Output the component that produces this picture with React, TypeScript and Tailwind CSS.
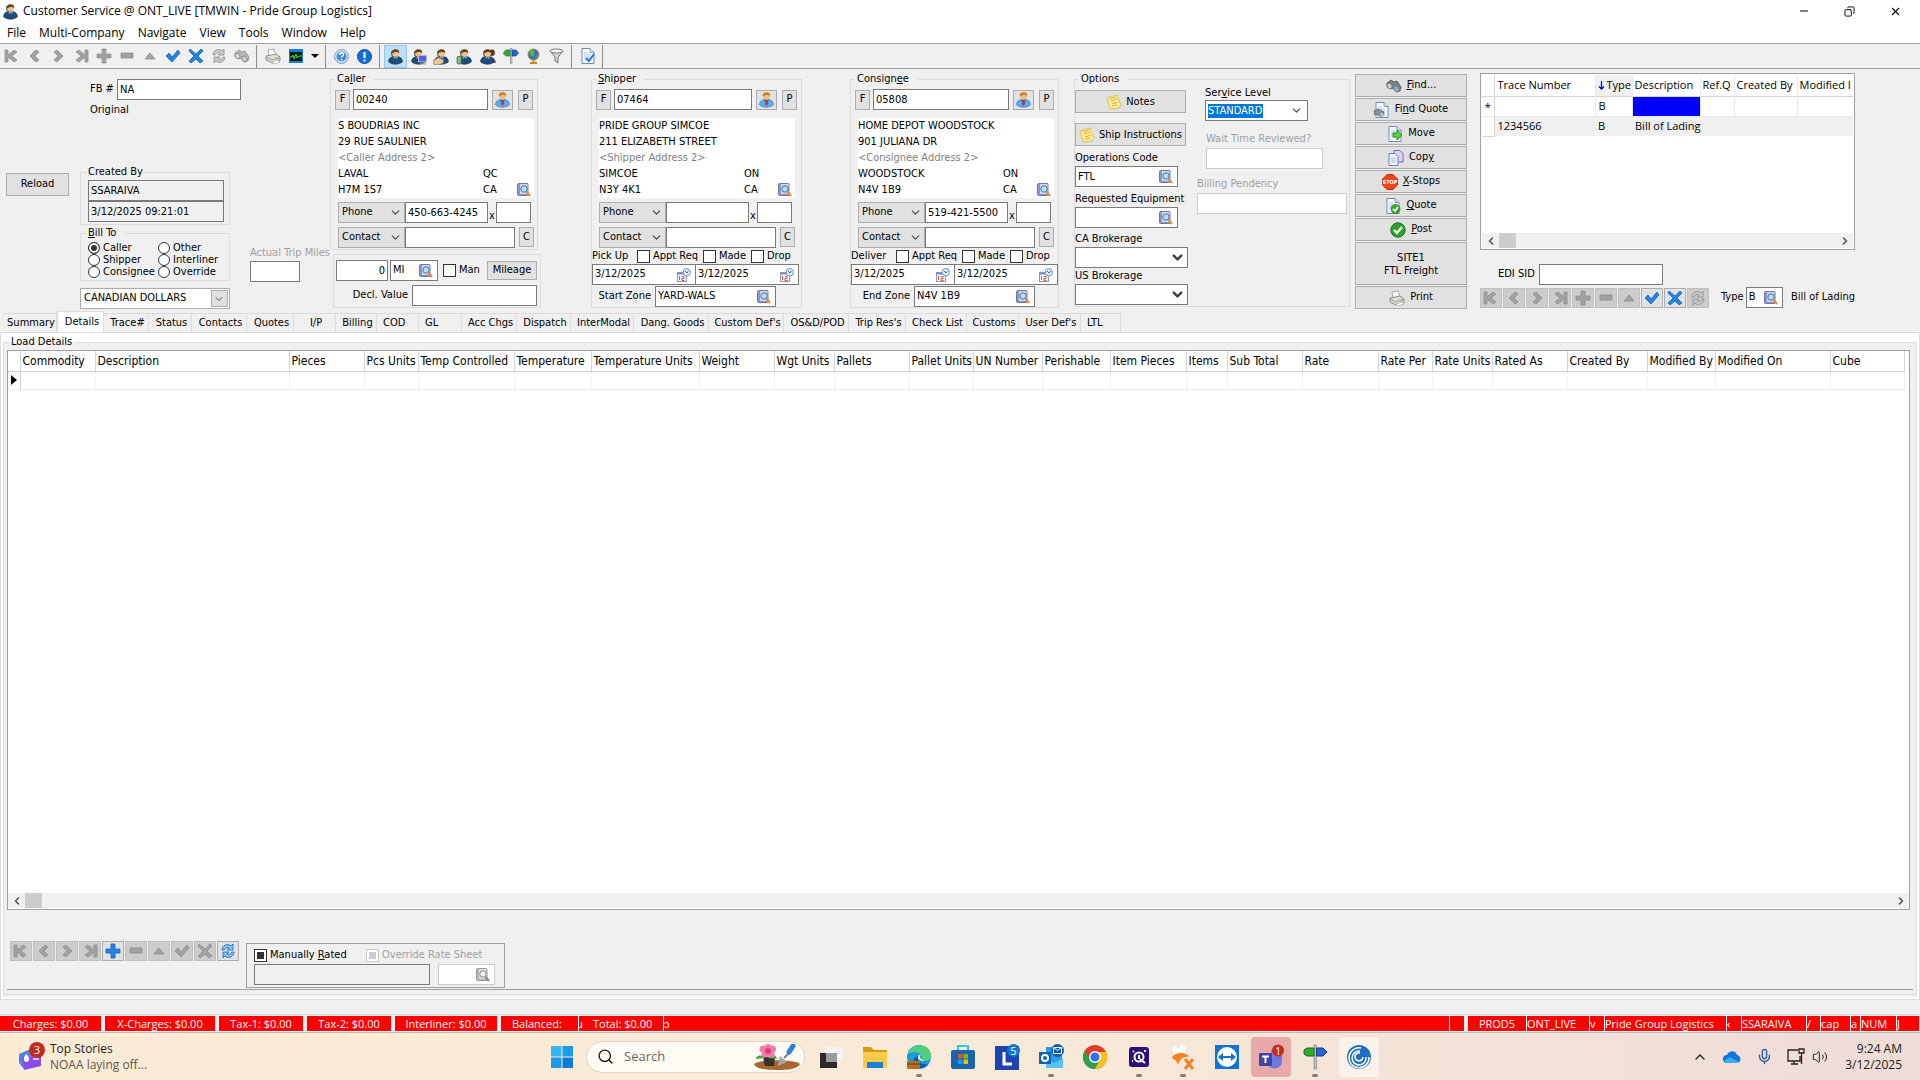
import type { ReactNode } from 'react';
import { ChevronDown, ChevronLeft, ChevronRight, ChevronUp, Copy, Mic, Minus, Search, Volume2, X } from 'lucide-react';
import { clsx } from 'clsx';

const MENUS = ['File', 'Multi-Company', 'Navigate', 'View', 'Tools', 'Window', 'Help'];

const TABS = [
  { label: 'Summary', width: 'w-[54px]' },
  { label: 'Details', width: 'w-[47px]', active: true },
  { label: 'Trace#', width: 'w-[45px]' },
  { label: 'Status', width: 'w-[43px]' },
  { label: 'Contacts', width: 'w-[55px]' },
  { label: 'Quotes', width: 'w-[47px]' },
  { label: 'I/P', width: 'w-[42px]' },
  { label: 'Billing', width: 'w-[41px]' },
  { label: 'COD', width: 'w-[42px]', left: true },
  { label: 'GL', width: 'w-[43px]', left: true },
  { label: 'Acc Chgs', width: 'w-[55px]' },
  { label: 'Dispatch', width: 'w-[54px]' },
  { label: 'InterModal', width: 'w-[63px]' },
  { label: 'Dang. Goods', width: 'w-[75px]' },
  { label: "Custom Def's", width: 'w-[75px]' },
  { label: 'OS&D/POD', width: 'w-[65px]' },
  { label: "Trip Res's", width: 'w-[57px]' },
  { label: 'Check List', width: 'w-[61px]' },
  { label: 'Customs', width: 'w-[52px]' },
  { label: "User Def's", width: 'w-[62px]' },
  { label: 'LTL', width: 'w-[40px]', left: true },
];

const COLUMNS = [
  { label: 'Commodity', width: 'w-[75px]' },
  { label: 'Description', width: 'w-[194px]' },
  { label: 'Pieces', width: 'w-[75px]' },
  { label: 'Pcs Units', width: 'w-[54px]' },
  { label: 'Temp Controlled', width: 'w-[96px]' },
  { label: 'Temperature', width: 'w-[77px]' },
  { label: 'Temperature Units', width: 'w-[108px]' },
  { label: 'Weight', width: 'w-[75px]' },
  { label: 'Wgt Units', width: 'w-[60px]' },
  { label: 'Pallets', width: 'w-[75px]' },
  { label: 'Pallet Units', width: 'w-[64px]' },
  { label: 'UN Number', width: 'w-[69px]' },
  { label: 'Perishable', width: 'w-[68px]' },
  { label: 'Item Pieces', width: 'w-[76px]' },
  { label: 'Items', width: 'w-[41px]' },
  { label: 'Sub Total', width: 'w-[75px]' },
  { label: 'Rate', width: 'w-[76px]' },
  { label: 'Rate Per', width: 'w-[54px]' },
  { label: 'Rate Units', width: 'w-[60px]' },
  { label: 'Rated As', width: 'w-[75px]' },
  { label: 'Created By', width: 'w-[80px]' },
  { label: 'Modified By', width: 'w-[68px]' },
  { label: 'Modified On', width: 'w-[115px]' },
  { label: 'Cube', width: 'w-[74px]' },
];

const CHARGES = [
  { label: 'Charges: $0.00', width: 'w-[101px]' },
  { label: 'X-Charges: $0.00', width: 'w-[110px]' },
  { label: 'Tax-1: $0.00', width: 'w-[84px]' },
  { label: 'Tax-2: $0.00', width: 'w-[84px]' },
  { label: 'Interliner: $0.00', width: 'w-[102px]' },
];

const SESSION = [
  { label: 'PROD5', width: 'w-[59px] justify-center' },
  { label: 'ONT_LIVE', width: 'w-[63px]' },
  { label: 'v', width: 'w-[15px]' },
  { label: 'Pride Group Logistics', width: 'w-[122px]' },
  { label: '‹', width: 'w-[15px]' },
  { label: 'SSARAIVA', width: 'w-[65px]' },
  { label: '/', width: 'w-[14px]' },
  { label: 'cap', width: 'w-[30px]' },
  { label: 'a', width: 'w-[10px]' },
  { label: 'NUM', width: 'w-[36px]' },
  { label: 'J', width: 'w-[23px]' },
];

type NavName = 'first' | 'prev' | 'next' | 'last' | 'add' | 'remove' | 'up' | 'check' | 'cancel' | 'refresh';

const NAV: NavName[] = ['first', 'prev', 'next', 'last', 'add', 'remove', 'up', 'check', 'cancel', 'refresh'];

const NAV_PATHS: Record<NavName, string> = {
  first: 'M1 2h3v5l6-5 3 2-5 4 5 4-3 2-6-5v5H1z',
  prev: 'M9 2l3 2-4 4 4 4-3 2-6-6z',
  next: 'M7 2L4 4l4 4-4 4 3 2 6-6z',
  last: 'M15 2h-3v5L6 2 3 4l5 4-5 4 3 2 6-5v5h3z',
  add: 'M6 1h4v5h5v4h-5v5H6v-5H1V6h5z',
  remove: 'M2 5h12v5H2z',
  up: 'M8 5l5 6H3z',
  check: 'M1 8l3-3 3 4 6-7 2 3-8 9z',
  cancel: 'M2 1l6 5 5-5 2 2-5 5 5 5-3 2-4-4-5 4-2-2 5-5-5-5z',
  refresh: 'M2 7c0-5 6-7 9-4l2-2v6H7l2-2C7 4 5 5 4 7zM14 9c0 5-6 7-9 4l-2 2V9h6l-2 2c2 1 4 0 5-2z',
};

function NavIcon({ name, on = false }: { name: NavName; on?: boolean }) {
  const light = name === 'refresh';
  return (
    <svg width="16" height="16" viewBox="0 0 16 16">
      <path
        d={NAV_PATHS[name]}
        fill={on ? (light ? '#7cc6f7' : '#2384e8') : light ? '#c8c8c8' : '#a2a2a2'}
        stroke={on ? '#1462b8' : '#8e8e8e'}
        strokeWidth="0.8"
      />
    </svg>
  );
}

function Binoculars({ gray = false }: { gray?: boolean }) {
  return (
    <svg width="16" height="16" viewBox="0 0 16 16">
      <path
        d="M1 5l4-3 3 2 3-1 4 6-1 4-4 1-3-4-2 1-4-2z"
        fill={gray ? '#b4b4b4' : '#7b8082'}
        stroke={gray ? '#8a8a8a' : '#44494c'}
        strokeWidth="0.7"
      />
      <ellipse cx="3.500" cy="8" rx="2.300" ry="2.800" transform="rotate(-30 3.500 8)" fill={gray ? '#dedede' : '#c6d0d6'} stroke="#777" strokeWidth="0.7" />
      <ellipse cx="10.500" cy="11" rx="2.500" ry="3" transform="rotate(-30 10.500 11)" fill={gray ? '#cfcfcf' : '#8bb6dc'} stroke="#777" strokeWidth="0.7" />
    </svg>
  );
}

function Lens({ gray = false }: { gray?: boolean }) {
  return (
    <svg width="14" height="14" viewBox="0 0 14 14">
      <rect x="0.500" y="0.500" width="10.500" height="12" rx="1" fill={gray ? '#dcdcdc' : '#d3d5ef'} stroke={gray ? '#999' : '#7276a6'} />
      <path d="M2 1v11" stroke={gray ? '#b5b5b5' : '#8f93cc'} strokeWidth="2" />
      <path d="M3 11.500h8" stroke={gray ? '#b5b5b5' : '#8f93cc'} />
      <circle cx="7" cy="6" r="3.200" fill={gray ? '#eee' : '#aee2fb'} stroke={gray ? '#8d8d8d' : '#4f7796'} />
      <path d="M9.500 9l3.500 4" stroke={gray ? '#888' : '#ee8636'} strokeWidth="2.200" />
    </svg>
  );
}

function Person({ dark = false, badge }: { dark?: boolean; badge?: 'pc' | 'box' | 'phone' | 'pair' }) {
  return (
    <svg width="17" height="17" viewBox="0 0 16 16">
      {badge === 'pair' && (
        <g>
          <circle cx="12" cy="4.500" r="3" fill="#5b3a2e" />
          <path d="M8 14c0-5 8-6 8 0z" fill="#c0485a" />
        </g>
      )}
      <path
        d="M1.500 13c0-4 3-5 6.500-5s6.500 1 6.500 5c-3 3-10 3-13 0z"
        fill={dark ? '#1d4a7a' : '#55aef0'}
        stroke={dark ? '#122f52' : '#2478c4'}
        strokeWidth="0.6"
      />
      <path d="M5.500 8L8 13l2.500-5z" fill={dark ? '#9fb6cc' : '#2470c8'} />
      <path d="M7.300 9h1.400l.8 3L8 14l-1.500-2z" fill={dark ? '#1d4a7a' : '#d62f20'} />
      <circle cx="8" cy="5" r="3.200" fill="#f6bd7d" />
      <path d="M4.500 5C3.500 0 12.500 0 11.500 5 10 3 7 3.500 4.500 5z" fill={dark ? '#5d4526' : '#c4841d'} />
      {dark && <path d="M4.500 3v4l2 1.500" fill="none" stroke="#333" strokeWidth="0.9" />}
      {badge === 'pc' && (
        <g>
          <rect x="8" y="7" width="7.500" height="6" fill="#4b63e6" stroke="#b8b8c8" />
          <path d="M9 15h6" stroke="#999" />
        </g>
      )}
      {badge === 'box' && <path d="M0 12l5-3 5 2v3l-5 2-5-1z" fill="#e8c795" stroke="#7d6337" strokeWidth="0.6" />}
      {badge === 'phone' && <rect x="1" y="8" width="4" height="7" rx="1" fill="#7fbe8e" stroke="#2b5a36" strokeWidth="0.7" />}
    </svg>
  );
}

function Printer() {
  return (
    <svg width="16" height="16" viewBox="0 0 16 16">
      <path d="M4 8L3 2l6-1 2 6z" fill="#fff" stroke="#8793a6" strokeWidth="0.8" />
      <path d="M1 8l10-2 4 3v4l-8 2-6-3z" fill="#dcdcd6" stroke="#7d7d78" strokeWidth="0.8" />
      <path d="M1 9l6 3 8-3" fill="none" stroke="#8f8f88" strokeWidth="0.8" />
      <path d="M7 14l6-2 2 2-6 2z" fill="#fff" stroke="#888" strokeWidth="0.5" />
      <circle cx="13" cy="11" r="0.8" fill="#4ec22d" />
    </svg>
  );
}

function Note() {
  return (
    <svg width="16" height="16" viewBox="0 0 16 16">
      <path d="M1 4l10-3 4 10-2 3-9 1z" fill="#fdeb92" stroke="#d9b84a" strokeWidth="0.8" />
      <path d="M4 5l6-2M5 7l6-2M6 10l6-2M6 12l5-1" stroke="#cfa83c" strokeWidth="0.8" />
    </svg>
  );
}

function Sheet({ children }: { children?: ReactNode }) {
  return (
    <svg width="16" height="16" viewBox="0 0 16 16">
      <path d="M2 0.500h8l4 4v11H2z" fill="#f4f8ff" stroke="#6f8db5" />
      <path d="M10 0.500v4h4" fill="#cbdcf2" stroke="#6f8db5" strokeWidth="0.8" />
      <path d="M4 5h4M4 7h7M4 9h7M4 11h5" stroke="#a9bcd8" strokeWidth="0.8" />
      {children}
    </svg>
  );
}

function CalendarClock() {
  return (
    <svg width="14" height="14" viewBox="0 0 14 14">
      <rect x="0.500" y="4.500" width="9" height="9" fill="#f3f5fb" stroke="#8e97c4" />
      <path d="M0 5.500h9" stroke="#7e8bd6" strokeWidth="2" />
      <path d="M2.500 8v4M5 8.500h2v2H5v2h2.500" stroke="#df5b31" fill="none" />
      <circle cx="9.800" cy="4.200" r="3.700" fill="#dcefff" stroke="#6b96b8" />
      <path d="M8 3l2 2 1.500-2" stroke="#355" fill="none" strokeWidth="0.9" />
    </svg>
  );
}

function ToolButton({ label, active, children }: { label: string; active?: boolean; children: ReactNode }) {
  return (
    <button
      type="button"
      aria-label={label}
      className={clsx('flex h-[23px] w-[23px] items-center justify-center', active && 'border border-[#90c8f6] bg-[#bfdff7]')}
    >
      {children}
    </button>
  );
}

function Separator() {
  return <div className="mr-1 ml-[3px] h-[23px] w-px shrink-0 bg-[#8d8d8d]" />;
}

function Field({ label, value = '', className }: { label: string; value?: string; className?: string }) {
  return (
    <input
      type="text"
      aria-label={label}
      defaultValue={value}
      className={clsx('h-[21px] min-w-0 border px-[2px] outline-none', className)}
    />
  );
}

// text box with an icon button at its right end
function IconField({ label, value = '', icon, className }: { label: string; value?: string; icon: ReactNode; className?: string }) {
  return (
    <div className={clsx('flex h-[21px] items-center border bg-white pr-1', className)}>
      <input type="text" aria-label={label} defaultValue={value} className="w-0 min-w-0 flex-1 px-[2px] outline-none" />
      <button type="button" aria-label={`Look up ${label}`}>{icon}</button>
    </div>
  );
}

function Select({ label, value = '', className, arrow }: { label: string; value?: string; className?: string; arrow?: ReactNode }) {
  return (
    <div className={clsx('relative h-[21px] shrink-0', className)}>
      <select aria-label={label} className="h-full w-full appearance-none border border-inherit bg-inherit pl-[3px] outline-none">
        <option>{value}</option>
      </select>
      <div className="pointer-events-none absolute inset-y-0 right-[3px] flex items-center">
        {arrow ?? <ChevronDown size={13} strokeWidth={2} className="text-[#444]" />}
      </div>
    </div>
  );
}

function Tick({ label, className }: { label: string; className?: string }) {
  return (
    <label className={clsx('flex h-[13px] items-center gap-[3px]', className)}>
      <input type="checkbox" className="h-[13px] w-[13px] shrink-0 appearance-none border border-[#333] bg-white" />
      {label}
    </label>
  );
}

function PushButton({ className, children, label }: { className?: string; children: ReactNode; label?: string }) {
  return (
    <button
      type="button"
      aria-label={label}
      className={clsx('flex shrink-0 items-center justify-center border border-[#adadad] bg-[#e1e1e1]', className)}
    >
      {children}
    </button>
  );
}

function NavBar({ enabled, className }: { enabled: NavName[]; className?: string }) {
  return (
    <div className={clsx('flex gap-px', className)}>
      {NAV.map((name) => {
        const on = enabled.includes(name);
        return (
          <button
            key={name}
            type="button"
            aria-label={name}
            className={clsx('flex h-5 w-[22px] items-center justify-center border', on ? 'border-[#adadad] bg-[#e1e1e1]' : 'border-[#bfbfbf] bg-[#cccccc]')}
          >
            <NavIcon name={name} on={on} />
          </button>
        );
      })}
    </div>
  );
}

type PartyProps = {
  title: ReactNode;
  role: string;
  code: string;
  name: string;
  street: string;
  city: string;
  region: string;
  postal: string;
  phone?: string;
  width: string;
  children?: ReactNode;
};

function Party({ title, role, code, name, street, city, region, postal, phone, width, children }: PartyProps) {
  return (
    <fieldset className={clsx('border border-[#dcdcdc]', width)}>
      <legend className="ml-1 pr-2 pl-[2px] leading-[14px]">{title}</legend>
      <div className="flex h-6 items-center pt-[3px] pr-1 pl-1">
        <PushButton className="h-5 w-[15px]">F</PushButton>
        <Field label={`${role} code`} value={code} className="mr-1 ml-[3px] flex-1 border-[#7a7a7a] bg-white" />
        <PushButton label={`${role} contact`} className="mr-[5px] h-5 w-[21px]"><Person /></PushButton>
        <PushButton className="h-5 w-[15px]">P</PushButton>
      </div>
      <div className="mt-2 ml-[7px] w-[196px] bg-white leading-4">
        <div>{name}</div>
        <div>{street}</div>
        <div className="text-[#7f7f7f]">&lt;{role} Address 2&gt;</div>
        <div className="flex"><span className="w-[145px]">{city}</span>{region}</div>
        <div className="flex">
          <span className="w-[145px]">{postal}</span>
          <span className="w-[34px]">CA</span>
          <button type="button" aria-label={`${role} address`}><Lens /></button>
        </div>
      </div>
      <div className="mt-1 ml-[7px] flex">
        <Select label={`${role} number type`} value="Phone" className="w-[67px] border-[#adadad] bg-[#e1e1e1]" />
        <Field label={`${role} phone`} value={phone} className="w-[83px] border-[#7a7a7a] bg-white" />
        <span className="w-2 self-end text-center leading-[14px]">x</span>
        <Field label={`${role} extension`} className="w-[35px] border-[#7a7a7a] bg-white" />
      </div>
      <div className="mt-1 mb-px ml-[7px] flex">
        <Select label={`${role} contact type`} value="Contact" className="w-[67px] border-[#adadad] bg-[#e1e1e1]" />
        <Field label={`${role} contact name`} className="mr-1 w-[110px] border-[#7a7a7a] bg-white" />
        <PushButton className="h-5 w-[15px]">C</PushButton>
      </div>
      {children}
    </fieldset>
  );
}

function Schedule({ action, zone, zoneValue }: { action: string; zone: string; zoneValue: string }) {
  return (
    <>
      <div className="mt-[2px] flex h-[13px] items-center">
        <span className="w-[45px]">{action}</span>
        <Tick label="Appt Req" className="w-[66px]" />
        <Tick label="Made" className="w-[48px]" />
        <Tick label="Drop" />
      </div>
      <div className="mt-px flex w-[207px]">
        <IconField label={`${action} from`} value="3/12/2025" icon={<CalendarClock />} className="flex-1 border-[#7a7a7a]" />
        <IconField label={`${action} to`} value="3/12/2025" icon={<CalendarClock />} className="flex-1 border-[#7a7a7a] border-l-0" />
      </div>
      <div className="mt-px flex items-center">
        <span className="w-[63px] pr-1 text-right">{zone}</span>
        <IconField label={zone} value={zoneValue} icon={<Lens />} className="w-[121px] border-[#7a7a7a]" />
      </div>
    </>
  );
}

function ScrollBar({ className }: { className?: string }) {
  return (
    <div className={clsx('flex h-[15px] items-center bg-[#f0f0f0]', className)}>
      <button type="button" aria-label="Scroll left" className="flex w-[17px] justify-center"><ChevronLeft size={12} strokeWidth={3} className="text-[#505050]" /></button>
      <div className="h-full w-[17px] bg-[#cdcdcd]" />
      <button type="button" aria-label="Scroll right" className="ml-auto flex w-[17px] justify-center"><ChevronRight size={12} strokeWidth={3} className="text-[#505050]" /></button>
    </div>
  );
}

function BillTo() {
  return (
    <fieldset className="mt-px border border-[#dcdcdc]">
      <legend className="ml-[5px] pr-2 pl-[2px] leading-[14px]"><u>B</u>ill To</legend>
      <div className="mt-[2px] mb-[2px] ml-[7px] grid grid-cols-[70px_1fr] leading-3">
        {['Caller', 'Other', 'Shipper', 'Interliner', 'Consignee', 'Override'].map((name) => (
          <label key={name} className="flex h-3 items-center gap-[3px] whitespace-nowrap">
            <input
              type="radio"
              name="bill-to"
              defaultChecked={name === 'Caller'}
              className="h-3 w-3 shrink-0 appearance-none rounded-full border border-[#333] bg-white checked:bg-[#333] checked:shadow-[inset_0_0_0_2px_#fff]"
            />
            {name}
          </label>
        ))}
      </div>
    </fieldset>
  );
}

function BillInfo() {
  return (
    <div className="w-[330px] shrink-0 pt-[7px]">
      <div className="ml-[90px] flex items-center">
        <label htmlFor="fb-number" className="w-[27px]">FB #</label>
        <input id="fb-number" defaultValue="NA" className="h-[21px] w-[124px] border border-[#7a7a7a] bg-white px-[2px] outline-none" />
      </div>
      <div className="mt-[3px] ml-[90px] leading-[14px]">Original</div>
      <div className="mt-12 flex pl-[6px]">
        <PushButton className="mt-[8px] h-[23px] w-[63px]">Reload</PushButton>
        <div className="ml-[11px] w-[150px]">
          <fieldset className="border border-[#dcdcdc]">
            <legend className="ml-[5px] pl-[2px] leading-[14px]">Created By</legend>
            <div className="mt-px mr-[5px] mb-[2px] ml-[7px] flex flex-col">
              <Field label="Created by" value="SSARAIVA" className="border-[#7a7a7a] bg-[#f0f0f0]" />
              <Field label="Created on" value="3/12/2025 09:21:01" className="border-[#7a7a7a] bg-[#f0f0f0]" />
            </div>
          </fieldset>
          <BillTo />
          <Select
            label="Currency"
            value="CANADIAN DOLLARS"
            className="mt-[7px] border-[#adadad] bg-white"
            arrow={
              <span className="-mr-[1px] flex h-[17px] w-[17px] items-center justify-center border border-[#adadad] bg-[#e1e1e1]">
                <ChevronDown size={12} className="text-[#555]" />
              </span>
            }
          />
        </div>
        <div className="ml-5 flex flex-col self-end pb-[27px]">
          <label htmlFor="trip-miles" className="whitespace-nowrap leading-4 text-[#a0a0a0]">Actual Trip Miles</label>
          <input id="trip-miles" className="h-[21px] w-[50px] border border-[#7a7a7a] bg-white outline-none" />
        </div>
      </div>
    </div>
  );
}

function Options() {
  const bigArrow = <ChevronDown size={15} strokeWidth={4} className="text-[#444]" />;
  return (
    <fieldset className="ml-[15px] w-[276px] shrink-0 border border-[#dcdcdc]">
      <legend className="ml-1 pr-2 pl-[2px] leading-[14px]">Options</legend>
      <div className="flex pb-px">
        <div className="flex w-[122px] flex-col pt-1 leading-4">
          <PushButton className="h-[23px] w-[111px] gap-1"><Note />Notes</PushButton>
          <PushButton className="mt-[10px] h-[23px] w-[111px] gap-1 whitespace-nowrap"><Note />Ship Instructions</PushButton>
          <span className="mt-1">Operations Code</span>
          <IconField label="Operations Code" value="FTL" icon={<Lens />} className="w-[103px] border-[#7a7a7a]" />
          <span className="mt-1 whitespace-nowrap">Requested Equipment</span>
          <IconField label="Requested Equipment" icon={<Lens />} className="w-[103px] border-[#7a7a7a]" />
          <span className="mt-[3px]">CA Brokerage</span>
          <Select label="CA Brokerage" className="w-[113px] border-[#7a7a7a] bg-white" arrow={bigArrow} />
          <span>US Brokerage</span>
          <Select label="US Brokerage" className="w-[113px] border-[#7a7a7a] bg-white" arrow={bigArrow} />
        </div>
        <div className="flex flex-col leading-[14px]">
          <span className="ml-2">Ser<u>v</u>ice Level</span>
          <div className="ml-2 flex h-[21px] w-[103px] items-center border border-[#7a7a7a] bg-white px-[2px]">
            <select aria-label="Service Level" className="appearance-none bg-[#0078d7] text-white outline-none"><option>STANDARD</option></select>
            <ChevronDown size={13} className="mr-[2px] ml-auto text-[#444]" />
          </div>
          <span className="mt-[11px] ml-[9px] text-[#a0a0a0]">Wait Time Reviewed?</span>
          <Field label="Wait Time Reviewed?" className="mt-[2px] ml-[9px] w-[117px] border-[#cccccc] bg-white" />
          <span className="mt-2 text-[#a0a0a0]">Billing Pendency</span>
          <Field label="Billing Pendency" className="mt-[2px] w-[150px] border-[#cccccc] bg-white" />
        </div>
      </div>
    </fieldset>
  );
}

function Actions() {
  const row = 'h-[23px] gap-[5px]';
  const okBadge = (
    <g>
      <circle cx="10.500" cy="11" r="4.500" fill="#35b030" stroke="#1b7d1a" strokeWidth="0.6" />
      <path d="M8 11l2 2 3-4" stroke="#fff" strokeWidth="1.600" fill="none" />
    </g>
  );
  return (
    <div className="mt-[2px] ml-[5px] flex w-[112px] shrink-0 flex-col gap-px">
      <PushButton className={row}><Binoculars /><span><u>F</u>ind...</span></PushButton>
      <PushButton className={row}>
        <Sheet>
          <path d="M0 9l4-2 6 3v3l-3 2-3-2-4-1z" fill="#8a9094" stroke="#444" strokeWidth="0.6" />
          <circle cx="8" cy="13" r="2" fill="#a7c6df" />
        </Sheet>
        <span>Fi<u>n</u>d Quote</span>
      </PushButton>
      <PushButton className={row}>
        <Sheet><path d="M6 7h4V4l5 5-5 5v-3H6z" fill="#59d62c" stroke="#1e7c12" strokeWidth="0.8" /></Sheet>
        <span>Move</span>
      </PushButton>
      <PushButton className={row}>
        <svg width="16" height="16" viewBox="0 0 16 16">
          <path d="M6 0.500h6l3 3V12H6z" fill="#ded3f4" stroke="#7d62b5" />
          <path d="M1 3.500h6l3 3v9H1z" fill="#eef4ff" stroke="#6786b5" />
          <path d="M3 8h5M3 10h5M3 12h5" stroke="#9fb3d4" strokeWidth="0.8" />
        </svg>
        <span>Cop<u>y</u></span>
      </PushButton>
      <PushButton className={row}>
        <svg width="16" height="16" viewBox="0 0 16 16">
          <path d="M5 0.500h6L15.500 5v6L11 15.500H5L0.500 11V5z" fill="#f2431b" stroke="#c32c0c" />
          <text x="8" y="10" fontSize="5.500" fontWeight="700" textAnchor="middle" fill="#fff">STOP</text>
        </svg>
        <span><u>X</u>-Stops</span>
      </PushButton>
      <PushButton className={row}><Sheet>{okBadge}</Sheet><span><u>Q</u>uote</span></PushButton>
      <PushButton className={row}>
        <svg width="16" height="16" viewBox="0 0 16 16">
          <circle cx="8" cy="8" r="7.200" fill="#2aa32a" stroke="#157015" />
          <path d="M4 8l3 3 5-6" stroke="#fff" strokeWidth="2.400" fill="none" />
        </svg>
        <span><u>P</u>ost</span>
      </PushButton>
      <PushButton className="h-[43px] flex-col leading-[13px]"><span>SITE1</span><span>FTL Freight</span></PushButton>
      <PushButton className={row}><Printer /><span>Print</span></PushButton>
    </div>
  );
}

function TraceGrid() {
  const cell = 'overflow-hidden border-r border-[#e8e8e8] p-0 text-left font-normal whitespace-nowrap';
  return (
    <div className="mt-px ml-[13px] w-[375px] shrink-0">
      <div className="flex h-[177px] flex-col border border-[#a0a0a8] bg-white p-px">
        <table className="w-full table-fixed border-collapse text-[11px] leading-[18px] [font-family:'Open_Sans',sans-serif]">
          <thead>
            <tr className="h-[21px] border-b border-[#d5d5d5]">
              <th className="w-3 border-r border-[#d5d5d5]" />
              <th className={clsx(cell, 'w-[101px] pl-[3px]')}>Trace Number</th>
              <th className={clsx(cell, 'w-[37px] bg-[#f0f0f0] pl-[2px]')}>
                <svg width="7" height="9" viewBox="0 0 7 9" className="mr-[2px] mb-[2px] inline"><path d="M3.500 0v8M1 5.500l2.500 2.500L6 5.500" fill="none" stroke="#0000ff" strokeWidth="1.300" /></svg>
                Type
              </th>
              <th className={clsx(cell, 'w-[68px] pl-[2px]')}>Description</th>
              <th className={clsx(cell, 'w-[34px] pl-[2px]')}>Ref.Q</th>
              <th className={clsx(cell, 'w-[63px] pl-[2px]')}>Created By</th>
              <th className={clsx(cell, 'border-r-0 pl-[2px]')}>Modified I</th>
            </tr>
          </thead>
          <tbody>
            <tr className="h-5 border-b border-[#e8e8e8]">
              <td className="border-r border-[#d5d5d5] p-0 text-center leading-none">*</td>
              <td className={cell} />
              <td className={clsx(cell, 'pl-[3px]')}>B</td>
              <td className="border-r border-[#e8e8e8] bg-[#0000ff]" />
              <td className={cell} />
              <td className={cell} />
              <td className={clsx(cell, 'border-r-0')} />
            </tr>
            <tr className="h-5 bg-[#f0f0f0]">
              <td className="border-r border-b border-[#d5d5d5] bg-white" />
              <td className="p-0 pl-[3px]">1234566</td>
              <td className="p-0 pl-[3px]">B</td>
              <td className="p-0 pl-[3px] whitespace-nowrap">Bill of Lading</td>
              <td colSpan={3} />
            </tr>
          </tbody>
        </table>
        <ScrollBar className="mt-auto" />
      </div>
      <div className="mt-[14px] ml-[18px] flex items-center">
        <label htmlFor="edi-sid" className="w-[41px]">EDI SID</label>
        <input id="edi-sid" className="h-[21px] w-[124px] border border-[#7a7a7a] bg-white outline-none" />
      </div>
      <div className="mt-[2px] flex items-center">
        <NavBar enabled={['check', 'cancel']} />
        <span className="ml-[12px] w-[27px]">Type</span>
        <IconField label="Type" value="B" icon={<Lens />} className="w-10 border-[#7a7a7a]" />
        <span className="ml-2 whitespace-nowrap">Bill of Lading</span>
      </div>
    </div>
  );
}

function LoadDetails() {
  return (
    <section className="flex min-h-0 flex-1 flex-col border border-[#dcdcdc] bg-white p-[2px]">
      <fieldset className="flex min-h-0 flex-1 flex-col border border-[#dcdcdc] bg-[#f0f0f0]">
        <legend className="ml-[5px] pr-1 pl-[2px] leading-[14px]">Load Details</legend>
        <div className="mt-px mr-[6px] ml-[3px] flex min-h-0 flex-1 flex-col border border-[#a0a0a0] bg-white">
          <table className="w-[1896px] table-fixed border-collapse text-[12px]">
            <thead>
              <tr className="h-5 border-b border-[#d5d5d5]">
                <th className="w-3 border-r border-[#d5d5d5]" />
                {COLUMNS.map((col) => (
                  <th key={col.label} className={clsx('border-r border-[#d5d5d5] p-0 pl-[2px] text-left font-normal whitespace-nowrap', col.width)}>
                    {col.label}
                  </th>
                ))}
              </tr>
            </thead>
            <tbody>
              <tr className="h-[18px] border-b border-[#ececec]">
                <td className="border-r border-[#d5d5d5] p-0">
                  <svg width="8" height="12" viewBox="0 0 8 12" className="ml-[3px] block"><path d="M0 1l6 5-6 5z" fill="#000" /></svg>
                </td>
                {COLUMNS.map((col) => <td key={col.label} className="border-r border-[#f0f0f0] p-0" />)}
              </tr>
            </tbody>
          </table>
          <ScrollBar className="mt-auto mb-px" />
        </div>
        <div className="mx-[3px] flex h-20 items-start border-b border-[#a0a0a0] pl-[3px]">
          <NavBar enabled={['add', 'refresh']} className="mt-[31px]" />
          <div className="mt-[33px] ml-[7px] w-[259px] border border-[#a0a0a0] px-[7px] pt-[5px] pb-[2px]">
            <div className="flex h-[13px] items-center">
              <label className="flex w-[112px] items-center gap-[3px]">
                <input type="checkbox" defaultChecked className="h-[13px] w-[13px] appearance-none border border-[#333] bg-[#333] shadow-[inset_0_0_0_2px_#fff]" />
                <span>Manually <u>R</u>ated</span>
              </label>
              <label className="flex items-center gap-[3px] text-[#a0a0a0]">
                <input type="checkbox" disabled defaultChecked className="h-[13px] w-[13px] appearance-none border border-[#ccc] bg-[#ccc] shadow-[inset_0_0_0_2px_#fff]" />
                Override Rate Sheet
              </label>
            </div>
            <div className="mt-[2px] flex gap-2">
              <Field label="Rate sheet" className="w-[176px] border-[#7a7a7a] bg-[#f0f0f0]" />
              <IconField label="Override sheet" icon={<Lens gray />} className="w-[57px] border-[#ccc]" />
            </div>
          </div>
        </div>
        <div className="h-1 shrink-0" />
      </fieldset>
      <div className="h-[2px] shrink-0 bg-[#f0f0f0]" />
    </section>
  );
}

function StatusBar() {
  return (
    <div className="mt-[14px] flex h-[19px] shrink-0 items-stretch border-t border-b border-t-[#d5d5d5] border-b-[#bbb] bg-[#f0f0f0] py-px text-[11px] leading-[15px] text-white [font-family:'Open_Sans',sans-serif]">
      {CHARGES.map((cell) => (
        <div key={cell.label} className={clsx('mr-1 flex shrink-0 justify-center bg-[#ff0000] whitespace-nowrap', cell.width)}>{cell.label}</div>
      ))}
      <div className="w-[77px] shrink-0 bg-[#ff0000] pl-[11px]">Balanced:</div>
      <div className="flex w-[85px] shrink-0 border-l border-white bg-[#ff0000] whitespace-nowrap">
        <span className="w-[14px]">ɹ</span>
        Total: $0.00
      </div>
      <div className="flex flex-1 border-l border-white bg-[#ff0000]">ɔ</div>
      <div className="w-[15px] border-l border-white bg-[#ff0000]" />
      <div className="ml-1 flex">
        {SESSION.map((cell) => (
          <div key={cell.label} className={clsx('flex shrink-0 overflow-hidden border-r border-white bg-[#ff0000] whitespace-nowrap', cell.width)}>{cell.label}</div>
        ))}
      </div>
    </div>
  );
}

function TaskIcon({ label, running, className, children }: { label: string; running?: boolean; className?: string; children: ReactNode }) {
  return (
    <button type="button" aria-label={label} className={clsx('relative flex h-10 w-10 items-center justify-center rounded', className)}>
      <svg width="26" height="26" viewBox="0 0 26 26">{children}</svg>
      {running && <span className="absolute bottom-0 h-[3px] w-[6px] rounded-full bg-[#857c75]" />}
    </button>
  );
}

function TaskBar() {
  return (
    <footer className="flex h-[47px] shrink-0 items-center bg-gradient-to-r from-[#fcebd5] via-[#f8ead8] to-[#eedcd7] text-[12px] text-[#222] [font-family:'Open_Sans',sans-serif]">
      <button type="button" className="flex w-[538px] items-center pl-[17px] text-left">
        <svg width="32" height="32" viewBox="0 0 32 32">
          <path d="M2 13l14-6 8 4v12L7 28 2 22z" fill="#4e86e8" />
          <path d="M5 16h19v9L7 29z" fill="#8a4be8" />
          <path d="M16 14h6M16 18h6" stroke="#d8c5ff" strokeWidth="2" />
          <path d="M9 13c4 3 4 7 1 8-4 0-4-4-1-8z" fill="#fff" />
          <circle cx="20" cy="9" r="8" fill="#c42b1c" />
          <text x="20" y="13" fontSize="11" textAnchor="middle" fill="#fff">3</text>
        </svg>
        <span className="ml-px leading-4">Top Stories<br /><span className="text-[#5c5650]">NOAA laying off...</span></span>
      </button>
      <div className="flex items-center gap-1">
        <TaskIcon label="Start" className="ml-1">
          <path d="M2 2h10.500v10.500H2z" fill="#35b6f4" />
          <path d="M13.500 2H24v10.500H13.500zM2 13.500h10.500V24H2z" fill="#1c9ce8" />
          <path d="M13.500 13.500H24V24H13.500z" fill="#0c7cd6" />
        </TaskIcon>
        <label className="mr-[2px] flex h-8 w-[219px] items-center rounded-full border border-[#e3d5c5] bg-[#fffaf4] pr-1 pl-[10px]">
          <Search size={17} strokeWidth={2} />
          <input type="search" placeholder="Search" className="ml-[10px] w-0 flex-1 text-[13px] outline-none placeholder:text-[#666]" />
          <svg width="46" height="26" viewBox="0 0 46 26">
            <path d="M0 20c6-5 40-5 46 0-2 5-12 6-23 6S2 25 0 20z" fill="#a8672f" />
            <path d="M9 13h12l-1 9h-9z" fill="#35312f" />
            <path d="M2 15c0-4 6-5 9-1zM14 14c3-5 8-4 9 1z" fill="#47a83c" />
            <g fill="#f47aa9">
              <circle cx="9" cy="5" r="3.500" /><circle cx="14" cy="3.500" r="3.500" /><circle cx="18.500" cy="5" r="3.500" />
              <circle cx="17" cy="10" r="3.500" /><circle cx="11" cy="10" r="3.500" />
            </g>
            <circle cx="14" cy="7" r="3" fill="#d93d7c" />
            <path d="M24 22l2-10 7 6z" fill="#9ba6b1" />
            <path d="M30 14l5-5" stroke="#77808a" strokeWidth="2" />
            <path d="M35 8l4-6" stroke="#2f80d8" strokeWidth="5" strokeLinecap="round" />
          </svg>
        </label>
        <TaskIcon label="Task view">
          <rect x="2" y="9" width="17" height="15" fill="#2a2a2a" />
          <rect x="8" y="3" width="17" height="15" fill="#f3f3f3" />
          <rect x="8" y="9" width="11" height="9" fill="#9b9b9b" />
        </TaskIcon>
        <TaskIcon label="File Explorer">
          <path d="M1 3h8l3 3h13v18H1z" fill="#d9990f" />
          <path d="M1 8h24v16H1z" fill="#fccb4a" />
          <path d="M5 18h16v6H5z" fill="#1881d2" />
        </TaskIcon>
        <TaskIcon label="Edge" running>
          <circle cx="13" cy="13" r="12" fill="#2099dc" />
          <path d="M2 10C5-2 25-2 25 12c0 5-7 6-9 3 1-7-8-9-14-5z" fill="#4fd07a" />
          <path d="M15 10c-2 3-1 6 4 6-5 3-11-3-4-6z" fill="#fbeedd" />
          <path d="M12 12c-1 6 4 9 10 8-3 5-11 6-14 0-2-4 1-8 4-8z" fill="#0c5eb0" />
          <rect x="1" y="17" width="13" height="8" rx="1" fill="#b5701e" />
          <path d="M1 20h13" stroke="#6e3f0b" />
        </TaskIcon>
        <TaskIcon label="Store">
          <path d="M8 7V2h10v5" fill="none" stroke="#2fc3ef" strokeWidth="2" />
          <rect x="1" y="6" width="24" height="19" rx="2" fill="#1765ad" />
          <path d="M8 10h4.500v4.500H8z" fill="#f25022" />
          <path d="M13.500 10H18v4.500h-4.500z" fill="#7fba00" />
          <path d="M8 15.500h4.500V20H8z" fill="#00a4ef" />
          <path d="M13.500 15.500H18V20h-4.500z" fill="#ffb900" />
        </TaskIcon>
        <TaskIcon label="L application">
          <rect x="1" y="2" width="24" height="24" fill="#1c43b0" />
          <path d="M10 8v12h8" fill="none" stroke="#fff" strokeWidth="3" />
          <circle cx="19.500" cy="6.500" r="6.500" fill="#0b78d6" />
          <text x="19.500" y="10.500" fontSize="11" textAnchor="middle" fill="#fff">5</text>
        </TaskIcon>
        <TaskIcon label="Outlook" running>
          <rect x="8" y="3" width="16" height="20" fill="#2b9be6" />
          <path d="M8 14l8 5 9-5v10H8z" fill="#56c2f5" />
          <rect x="1" y="8" width="12" height="12" fill="#0f64b8" />
          <circle cx="7" cy="14" r="3" fill="none" stroke="#fff" strokeWidth="2" />
          <circle cx="19.500" cy="6.500" r="6.500" fill="#0b5dad" />
          <path d="M15.500 3.500h8v6h-8zM15.500 3.500l4 3 4-3" fill="none" stroke="#fff" />
        </TaskIcon>
        <TaskIcon label="Chrome">
          <circle cx="13" cy="13" r="12" fill="#e33b2e" />
          <path d="M2.600 7A12 12 0 0 0 13 25l5-9H8z" fill="#2ea14c" />
          <path d="M24 8a12 12 0 0 1-11 17l5-9-2-8z" fill="#fbc116" />
          <circle cx="13" cy="13" r="6" fill="#fff" />
          <circle cx="13" cy="13" r="4.600" fill="#2f74e8" />
        </TaskIcon>
        <TaskIcon label="Quill" running>
          <rect x="3" y="3" width="20" height="20" rx="3" fill="#2d0f78" />
          <circle cx="13" cy="13" r="4.500" fill="none" stroke="#fff" strokeWidth="2" />
          <path d="M14 15l5 4M13 11v4M7 7l1 1M19 6v2M6 17h1" stroke="#fff" strokeWidth="2" />
        </TaskIcon>
        <TaskIcon label="Xming" running>
          <path d="M3 9c-2-9 5-9 5-2 2-9 9-8 7 1-2 6-12 7-12 1z" fill="#fff" />
          <path d="M2 14c2-7 15-6 17-1-6-1-9 2-11 8-1-4-3-5-6-7z" fill="#f58220" />
          <path d="M15 15l8 10M23 15l-8 10" stroke="#f58220" strokeWidth="3" />
        </TaskIcon>
        <TaskIcon label="TeamViewer">
          <rect x="1" y="1" width="24" height="24" fill="#0e72d6" />
          <circle cx="13" cy="13" r="10" fill="#fff" />
          <path d="M4 13l5-4v3h8V9l5 4-5 4v-3H9v3z" fill="#0e72d6" />
        </TaskIcon>
        <TaskIcon label="Teams" className="bg-[#e8aaa8]">
          <circle cx="17" cy="8" r="4" fill="#7b83eb" />
          <path d="M9 11h15v6c0 9-12 10-15 2z" fill="#7078dc" />
          <rect x="1" y="9" width="13" height="13" rx="1" fill="#3e45a8" />
          <path d="M4 12.500h7M7.500 12v7" stroke="#fff" strokeWidth="2" />
          <circle cx="20" cy="6.500" r="6" fill="#c42b1c" />
          <text x="20" y="10.500" fontSize="10" textAnchor="middle" fill="#fff">1</text>
        </TaskIcon>
        <TaskIcon label="TruckMate" running>
          <rect x="12" y="1" width="2.500" height="24" fill="#b8bfc4" stroke="#6b7378" strokeWidth="0.500" />
          <path d="M2 6l3-2h7v8H5l-3-2z" fill="#2fae2c" stroke="#167014" />
          <path d="M14.500 4H21l4 4-4 4h-6.500z" fill="#2b62d8" stroke="#173a8e" />
        </TaskIcon>
        <TaskIcon label="Citrix" className="bg-[#fbf2ea]">
          <circle cx="13" cy="13" r="12" fill="#1c70bf" />
          <path d="M23 13a10 10 0 1 1-8-9M20 13a7 7 0 1 1-6-6M17 13a4 4 0 1 1-3-4" fill="none" stroke="#fff" strokeWidth="1.500" />
        </TaskIcon>
      </div>
      <div className="ml-auto flex items-center pr-[18px]">
        <ChevronUp size={16} />
        <svg width="18" height="14" viewBox="0 0 18 14" className="mx-[15px]">
          <path d="M4 13a4 4 0 0 1 0-8c2-5 9-5 10 0 5 1 4 8 0 8z" fill="#1078d4" />
          <path d="M1 11l6-4 9 5-2 1H4z" fill="#3bb0f0" />
        </svg>
        <Mic size={17} className="text-[#31609f]" />
        <svg width="18" height="20" viewBox="0 0 18 20" className="mr-[7px] ml-[14px]">
          <path d="M11 3H1v11h12V9M7 14v3M4 17h7M12 2h5v4h-5zM14.500 6v11" fill="none" stroke="#222" strokeWidth="1.300" />
        </svg>
        <Volume2 size={16} strokeWidth={1.500} />
        <div className="ml-[17px] text-right leading-[16px]">9:24 AM<br />3/12/2025</div>
      </div>
    </footer>
  );
}

export default function App() {
  return (
    <div className="flex h-screen flex-col overflow-hidden bg-[#f0f0f0] text-[11px] text-black [font-family:'DejaVu_Sans_Condensed','Noto_Sans',sans-serif]">
      <header className="bg-white text-[12px] [font-family:'Open_Sans',sans-serif]">
        <div className="flex h-[22px] items-center gap-1 pl-[2px]">
          <Person dark />
          <h1>Customer Service @ ONT_LIVE [TMWIN - Pride Group Logistics]</h1>
          <div className="mr-[18px] ml-auto flex gap-[34px]">
            <button type="button" aria-label="Minimize"><Minus size={12} /></button>
            <button type="button" aria-label="Restore"><Copy size={11} className="-scale-x-100" /></button>
            <button type="button" aria-label="Close"><X size={13} /></button>
          </div>
        </div>
        <nav className="flex h-[21px] items-center gap-[13px] pl-[7px]">
          {MENUS.map((menu) => <button key={menu} type="button">{menu}</button>)}
        </nav>
      </header>

      <div className="flex h-[26px] shrink-0 items-center border-t border-b border-[#a0a0a0]">
        {NAV.map((name) => (
          <ToolButton key={name} label={name}><NavIcon name={name} on={name === 'check' || name === 'cancel'} /></ToolButton>
        ))}
        <ToolButton label="Find"><Binoculars gray /></ToolButton>
        <Separator />
        <ToolButton label="Print"><Printer /></ToolButton>
        <ToolButton label="Monitor">
          <svg width="14" height="14" viewBox="0 0 14 14">
            <rect width="14" height="14" fill="#1083d8" />
            <rect x="1" y="3" width="12" height="9" fill="#041c10" />
            <path d="M1 8h2l1-2 1 4 2-5 1 4 2-2h3" fill="none" stroke="#34e05a" />
          </svg>
        </ToolButton>
        <button type="button" aria-label="More monitors" className="flex w-[15px] justify-center">
          <svg width="8" height="4" viewBox="0 0 8 4"><path d="M0 0h8L4 4z" /></svg>
        </button>
        <Separator />
        <ToolButton label="Help">
          <svg width="15" height="15" viewBox="0 0 15 15">
            <circle cx="7.500" cy="7.500" r="7" fill="#cfe2f5" stroke="#7d9cc0" />
            <circle cx="7.500" cy="7.500" r="5" fill="#3f8be0" />
            <path d="M5.500 6c0-3 4-3 4-.5 0 1.500-2 1.500-2 3M7.500 10v1.500" fill="none" stroke="#fff" strokeWidth="1.400" />
          </svg>
        </ToolButton>
        <ToolButton label="Alerts">
          <svg width="15" height="15" viewBox="0 0 15 15">
            <circle cx="7.500" cy="7.500" r="7" fill="#0f6fe0" stroke="#0a4aa4" />
            <path d="M7.500 3v6M7.500 10.500v2" stroke="#fff" strokeWidth="2.200" />
          </svg>
        </ToolButton>
        <Separator />
        <ToolButton label="Customer service" active><Person dark /></ToolButton>
        <ToolButton label="Dispatch"><Person dark badge="pc" /></ToolButton>
        <ToolButton label="Driver"><Person dark badge="box" /></ToolButton>
        <ToolButton label="Contact"><Person dark badge="phone" /></ToolButton>
        <ToolButton label="Users"><Person dark badge="pair" /></ToolButton>
        <ToolButton label="Routes">
          <svg width="16" height="16" viewBox="0 0 16 16">
            <rect x="7.200" y="0.500" width="1.800" height="15" fill="#c9ced2" stroke="#6b7378" strokeWidth="0.500" />
            <path d="M1 4l2-2h4v6H3L0.500 6z" fill="#2fae2c" stroke="#167014" strokeWidth="0.600" />
            <path d="M9 2h4l2.500 3L13 8H9z" fill="#2b62d8" stroke="#173a8e" strokeWidth="0.600" />
          </svg>
        </ToolButton>
        <ToolButton label="Map">
          <svg width="15" height="16" viewBox="0 0 15 16">
            <circle cx="7.500" cy="6.500" r="5.500" fill="#2a6ee0" stroke="#b98d2b" />
            <path d="M4 3l3-1 2 3-2 4-3-2zM9 8l3-1-1 3z" fill="#4dbb3b" />
            <path d="M4 15h7M7.500 12v3" stroke="#b98d2b" strokeWidth="2" />
          </svg>
        </ToolButton>
        <ToolButton label="Filter">
          <svg width="15" height="16" viewBox="0 0 15 16">
            <path d="M1 3h13l-5 6v6l-3-2V9z" fill="#d6d6d6" stroke="#777" />
            <ellipse cx="7.500" cy="3" rx="6.500" ry="2" fill="#f4f4f4" stroke="#777" />
          </svg>
        </ToolButton>
        <Separator />
        <ToolButton label="Report"><Sheet><path d="M6 10l3 3 5-7" fill="none" stroke="#2873dc" strokeWidth="2" /></Sheet></ToolButton>
        <Separator />
      </div>

      <main className="flex min-h-0 flex-1 flex-col">
        <div className="flex shrink-0 items-start pt-[3px] pb-[2px]">
          <BillInfo />
          <div className="w-[211px] shrink-0">
            <Party
              title={<>Ca<u>l</u>ler</>}
              role="Caller"
              code="00240"
              name="S BOUDRIAS INC"
              street="29 RUE SAULNIER"
              city="LAVAL"
              region="QC"
              postal="H7M 1S7"
              phone="450-663-4245"
              width="w-[208px]"
            />
            <div className="mt-1 ml-[3px] w-[208px] border border-[#dcdcdc] pt-[5px] pr-[3px] pb-px pl-[2px]">
              <div className="flex items-center">
                <Field label="Miles" value="0" className="mr-[2px] w-[52px] border-[#7a7a7a] bg-white text-right" />
                <IconField label="Distance unit" value="MI" icon={<Lens />} className="mr-[5px] w-[48px] border-[#7a7a7a]" />
                <Tick label="Man" />
                <PushButton className="ml-auto h-[19px] w-[50px]">Mileage</PushButton>
              </div>
              <div className="mt-1 flex items-center justify-end">
                <label htmlFor="decl-value" className="mr-1">Decl. Value</label>
                <input id="decl-value" className="h-[21px] w-[125px] border border-[#7a7a7a] bg-white outline-none" />
              </div>
            </div>
          </div>
          <div className="ml-[50px] shrink-0">
            <Party
              title={<><u>S</u>hipper</>}
              role="Shipper"
              code="07464"
              name="PRIDE GROUP SIMCOE"
              street="211 ELIZABETH STREET"
              city="SIMCOE"
              region="ON"
              postal="N3Y 4K1"
              width="w-[211px]"
            >
              <Schedule action="Pick Up" zone="Start Zone" zoneValue="YARD-WALS" />
            </Party>
          </div>
          <div className="ml-12 shrink-0">
            <Party
              title={<>Consign<u>e</u>e</>}
              role="Consignee"
              code="05808"
              name="HOME DEPOT WOODSTOCK"
              street="901 JULIANA DR"
              city="WOODSTOCK"
              region="ON"
              postal="N4V 1B9"
              phone="519-421-5500"
              width="w-[209px]"
            >
              <Schedule action="Deliver" zone="End Zone" zoneValue="N4V 1B9" />
            </Party>
          </div>
          <Options />
          <Actions />
          <TraceGrid />
        </div>

        <div role="tablist" className="flex shrink-0 items-end pl-[3px]">
          {TABS.map((tab) => (
            <button
              key={tab.label}
              type="button"
              role="tab"
              aria-selected={!!tab.active}
              className={clsx(
                'flex shrink-0 items-center border border-b-0 border-[#dcdcdc] whitespace-nowrap',
                tab.width,
                tab.left ? 'pl-[6px]' : 'justify-center pl-[3px]',
                tab.active ? 'h-[21px] bg-white' : 'h-[19px] border-l-0'
              )}
            >
              {tab.label}
            </button>
          ))}
        </div>
        <LoadDetails />
        <StatusBar />
      </main>

      <TaskBar />
    </div>
  );
}
